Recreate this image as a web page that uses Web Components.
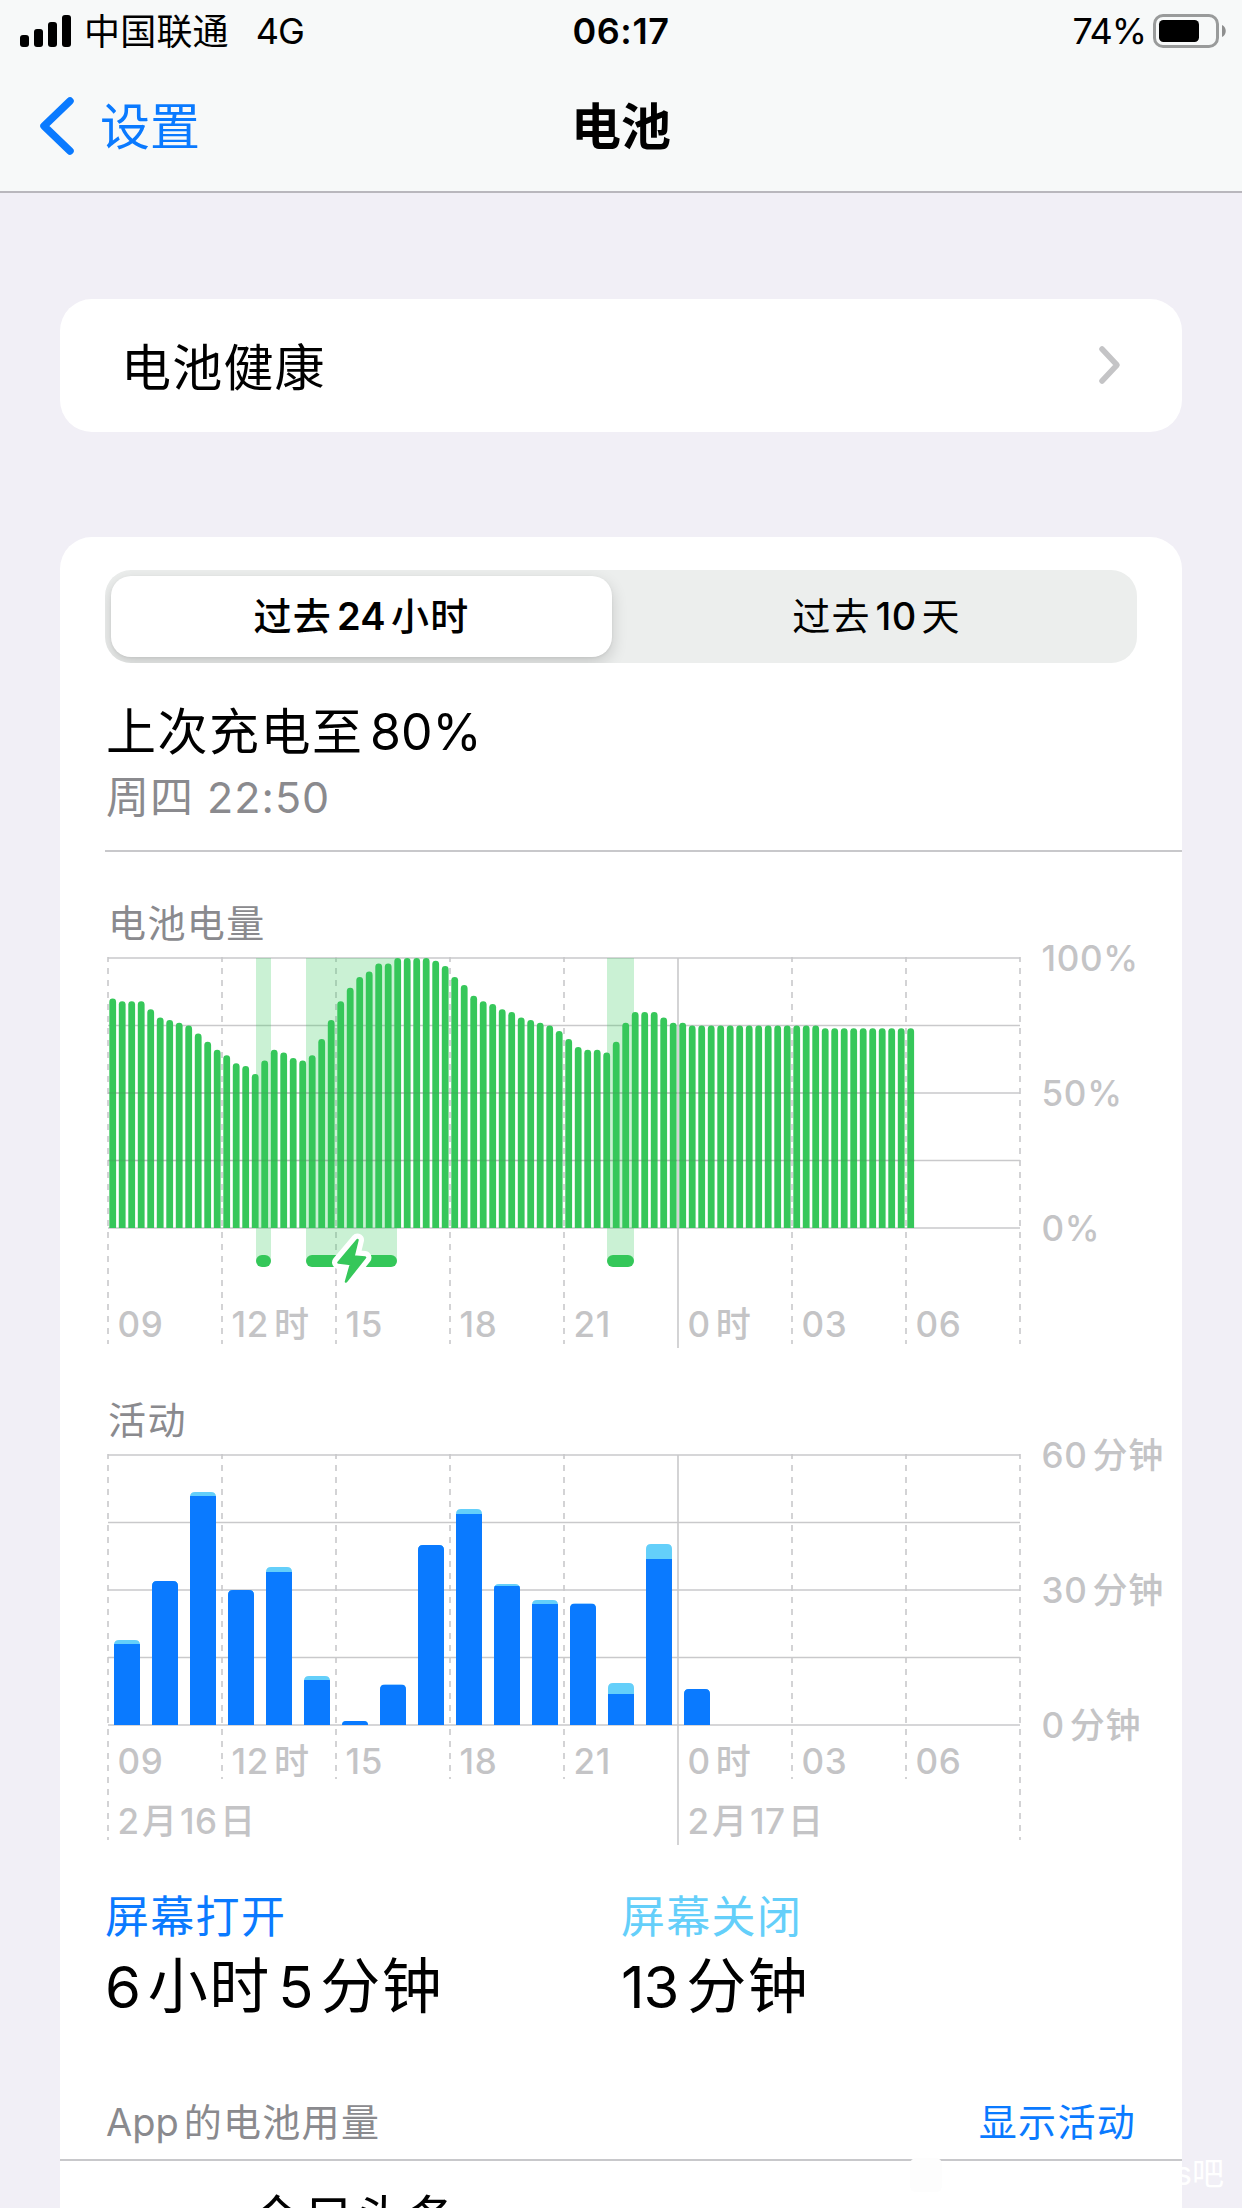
<!DOCTYPE html>
<html lang="zh-CN">
<head>
<meta charset="utf-8">
<meta name="viewport" content="width=1242">
<title>电池</title>
<style>
    body {
        margin: 0;
        width: 1242px;
        height: 2208px;
        overflow: hidden;
        background: #f1eff6;
        color: #000;
        font-family: Inter, "Noto Sans CJK SC", sans-serif;
    }
</style>
</head>
<body>
<battery-page></battery-page>

<script>
// Splits a string into CJK and latin/digit runs, so a gap can be put between them
function splitRuns(text) {
    return text.match(/[\u4e00-\u9fff]+|[^\u4e00-\u9fff]+/g) || [];
}

class MixedText extends HTMLElement {

    constructor() {
        super();
        this.attachShadow({mode: 'open'});
    }

    connectedCallback() {
        const runs = splitRuns(this.getAttribute('text'));
        this.shadowRoot.innerHTML = `
            <style>
                :host { display: block; white-space: nowrap; }
                span + span { margin-left: var(--run-gap, 0.13em); }
                .latin { letter-spacing: var(--latin-spacing, 0); }
                .cjk { font-weight: var(--cjk-weight, inherit); font-size: var(--cjk-size, 1em); }
            </style>
            ${runs.map(r => `<span class="${/[\u4e00-\u9fff]/.test(r) ? 'cjk' : 'latin'}">${r}</span>`).join('')}
            `;
    }

}

class StatusBar extends HTMLElement {

    constructor() {
        super();
        this.attachShadow({mode: 'open'});
        this.shadowRoot.innerHTML = `
            <style>
                :host {
                    display: grid;
                    grid-template-columns: 1fr auto 1fr;
                    align-items: center;
                    height: 62px;
                    padding: 0 15px;
                    font-size: 36px;
                    line-height: 44px;
                }
                svg { display: block; }
                .left, .right { display: flex; align-items: center; }
                .left { padding-left: 5px; }
                .right { justify-content: flex-end; }
                .carrier { margin-left: 13px; padding-top: 1px; letter-spacing: 0.2px; }
                .network { margin-left: 27px; letter-spacing: -1px; }
                .time { font-weight: 600; letter-spacing: 0.6px; }
                .percent { margin-right: 7px; letter-spacing: -1.1px; }
            </style>
            <div class="left">
                <svg width="51" height="34" viewBox="0 0 51 34">
                    <rect x="0" y="21" width="9" height="12" rx="3"/>
                    <rect x="14" y="15" width="9" height="18" rx="3"/>
                    <rect x="28" y="8" width="9" height="25" rx="3"/>
                    <rect x="42" y="1" width="9" height="32" rx="3"/>
                </svg>
                <span class="carrier">中国联通</span>
                <span class="network">4G</span>
            </div>
            <span class="time">06:17</span>
            <div class="right">
                <span class="percent">74%</span>
                <svg width="74" height="34" viewBox="0 0 74 34">
                    <rect x="1.5" y="1.5" width="63" height="31" rx="8.5" fill="none" stroke="#999b9b" stroke-width="3"/>
                    <rect x="6" y="6" width="40" height="22" rx="4.5"/>
                    <path d="M69 11 C74 13 74 21 69 23 Z" fill="#8e8f8f"/>
                </svg>
            </div>
            `;
    }

}

class NavBar extends HTMLElement {

    constructor() {
        super();
        this.attachShadow({mode: 'open'});
        this.shadowRoot.innerHTML = `
            <style>
                :host {
                    display: grid;
                    grid-template-columns: 1fr auto 1fr;
                    align-items: center;
                    height: 129px;
                    padding: 0 39px;
                    font-size: 50px;
                    line-height: 60px;
                    border-bottom: 2px solid #b9b7bd;
                }
                .back { display: flex; align-items: center; color: #0a7aff; }
                svg { display: block; margin-right: 25px; }
                .title { font-weight: 600; }
            </style>
            <div class="back">
                <svg width="36" height="60" viewBox="0 0 36 60">
                    <path d="M31 4 L5 29 L31 54" fill="none" stroke="#0a7aff" stroke-width="7.5" stroke-linecap="round" stroke-linejoin="round"/>
                </svg>
                <span>${this.getAttribute('back') || '设置'}</span>
            </div>
            <span class="title"><slot></slot></span>
            `;
    }

}

class SettingsCard extends HTMLElement {

    constructor() {
        super();
        this.attachShadow({mode: 'open'});
        this.shadowRoot.innerHTML = `
            <style>
                :host {
                    display: block;
                    margin: 0 60px;
                    background: #fff;
                    border-radius: 32px;
                    overflow: hidden;
                }
            </style>
            <slot></slot>
            `;
    }

}

class LinkRow extends HTMLElement {

    constructor() {
        super();
        this.attachShadow({mode: 'open'});
        this.shadowRoot.innerHTML = `
            <style>
                :host {
                    display: flex;
                    align-items: center;
                    justify-content: space-between;
                    height: 133px;
                    padding: 0 60px 0 61px;
                    font-size: 50px;
                    line-height: 60px;
                    letter-spacing: 1.2px;
                }
                span { padding-top: 6px; }
            </style>
            <span><slot></slot></span>
            <svg width="24" height="40" viewBox="0 0 24 40">
                <path d="M4 4 L19 20 L4 36" fill="none" stroke="#c4c4c6" stroke-width="5.5" stroke-linecap="round" stroke-linejoin="round"/>
            </svg>
            `;
    }

}

class SegmentedControl extends HTMLElement {

    constructor() {
        super();
        this.attachShadow({mode: 'open'});
        this.shadowRoot.innerHTML = `
            <style>
                :host {
                    display: grid;
                    grid-template-columns: 501px 1fr;
                    box-sizing: border-box;
                    height: 93px;
                    padding: 6px;
                    background: #eceeed;
                    border-radius: 26px;
                    overflow: hidden;
                    font-size: 38px;
                    line-height: 81px;
                    letter-spacing: 1.2px;
                    --latin-spacing: 0.4px;
                    --cjk-weight: 400;
                }
                .item { display: flex; justify-content: center; font-weight: 500; }
                .selected {
                    background: #fff;
                    border-radius: 20px;
                    box-shadow: 0 6px 16px rgba(0, 0, 0, 0.16), 0 1px 3px rgba(0, 0, 0, 0.06);
                    font-weight: 600;
                    --cjk-weight: 500;
                }
                .item:last-child { padding-left: 10px; }
            </style>
            <div class="item selected"><mixed-text text="过去24小时"></mixed-text></div>
            <div class="item"><mixed-text text="过去10天"></mixed-text></div>
            `;
    }

}

// Shared frame of both charts: a 912x270 plot, 24 hours wide, with a line every 3 hours
class BaseChart extends HTMLElement {

    constructor() {
        super();
        this.attachShadow({mode: 'open'});
        this._hours = ['09', '12时', '15', '18', '21', '0时', '03', '06'];
        this._plotHeight = 270;
        this._step = 114;
    }

    connectedCallback() {
        this.shadowRoot.innerHTML = `
            <style>
                :host { display: block; }
                svg { display: block; overflow: visible; }
                text {
                    font-family: Inter, "Noto Sans CJK SC", sans-serif;
                    font-size: 35px;
                    font-weight: 500;
                    letter-spacing: 0.7px;
                    fill: #c4c4c6;
                }
            </style>
            <svg width="1122" height="${this._height}" viewBox="-48 -8 1122 ${this._height}">
                ${this._grid()}
                ${this._content()}
                ${this._labels()}
            </svg>
            `;
    }

    _text(x, y, str, gap = 5) {
        const runs = splitRuns(str).map((r, i) => `<tspan${i ? ` dx="${gap}"` : ''}>${r}</tspan>`);
        return `<text x="${x}" y="${y}">${runs.join('')}</text>`;
    }

    _lines(color, width) {
        let out = '';
        for (let i = 0; i <= 4; i++) {
            const y = i * this._plotHeight / 4;
            out += `<line x1="0" x2="912" y1="${y}" y2="${y}" stroke="${color}" stroke-width="${width}"/>`;
        }
        return out;
    }

    _grid() {
        let out = this._lines('#c9c9cb', 1.6);
        for (let i = 0; i <= 8; i++) {
            const solid = i === 5;
            const end = solid ? this._solidEnd : (i % 8 ? this._dashEnd : this._edgeEnd);
            out += `<line x1="${i * this._step}" x2="${i * this._step}" y1="${solid ? 0 : -1}" y2="${end}"
                stroke="#c9c9cb" stroke-width="1.6" ${solid ? '' : 'stroke-dasharray="6 6" stroke-dashoffset="1"'}/>`;
        }
        return out;
    }

    _labels() {
        let out = '';
        this._hours.forEach((h, i) => {
            out += this._text(i * this._step + 9.5, this._hourY, h);
        });
        this._scale.forEach((s, i) => {
            out += this._text(933.5, 12.5 + i * this._plotHeight / 2, s);
        });
        return out;
    }

}

class LevelChart extends BaseChart {

    constructor() {
        super();
        this._height = 406;
        this._solidEnd = 390;
        this._dashEnd = 386;
        this._edgeEnd = 386;
        this._hourY = 378.5;
        this._scale = ['100%', '50%', '0%'];
        // Battery percentage, one value per quarter of an hour
        this._levels = [
            85, 84, 84, 84, 81, 78, 77, 76, 75, 72, 69, 66,
            64, 61, 60, 57, 62, 66, 65, 63, 62, 64, 70, 77,
            84, 89, 93, 95, 98, 98, 100, 100, 100, 100, 99, 97,
            93, 90, 86, 84, 83, 81, 80, 78, 77, 76, 75, 73,
            70, 67, 66, 66, 65, 69, 76, 80, 80, 80, 78, 76,
            76, 75, 75, 75, 75, 75, 75, 75, 75, 75, 75, 75,
            75, 75, 75, 74, 74, 74, 74, 74, 74, 74, 74, 74, 74
        ];
        this._charging = [[148, 15], [198, 91], [499, 27]];
    }

    _content() {
        let out = '';
        this._charging.forEach(([x, w]) => {
            out += `<rect x="${x}" y="0" width="${w}" height="303" fill="#34c759" fill-opacity="0.26"/>`;
        });
        this._levels.forEach((v, i) => {
            const x = 1.3 + i * 9.5;
            const y = 270 - v * 2.7;
            out += `<path d="M${x} 270 V${y + 3.4} a3.4 3.4 0 0 1 6.8 0 V270 Z" fill="#36c75a"/>`;
        });
        [135, 202.5].forEach(y => {
            out += `<line x1="0" x2="807" y1="${y}" y2="${y}" stroke="#555" stroke-opacity="0.13" stroke-width="1.4"/>`;
        });
        this._charging.forEach(([x, w]) => {
            out += `<rect x="${x}" y="297" width="${w}" height="12" rx="6" fill="#34c759"/>`;
        });
        const bolt = 'M249.5 282 L230.5 304.5 L243 306 L238 323.5 L257 299.5 L245.5 298.5 Z';
        out += `<path d="${bolt}" fill="#fff" stroke="#fff" stroke-width="13" stroke-linejoin="round"/>`;
        out += `<path d="${bolt}" fill="#36c75a" stroke="#36c75a" stroke-width="2.5" stroke-linejoin="round"/>`;
        return out;
    }

}

class ActivityChart extends BaseChart {

    constructor() {
        super();
        this._height = 406;
        this._solidEnd = 390;
        this._dashEnd = 324;
        this._edgeEnd = 385;
        this._hourY = 318.5;
        this._scale = ['60分钟', '30分钟', '0分钟'];
        // Per hour: height with the screen off part included, height of the screen on part
        this._bars = [
            [85, 81], [144, 144], [233, 229], [135, 135], [158, 153], [49, 45],
            [4, 4], [40.5, 40.5], [180, 180], [216, 211], [141, 139], [125, 121],
            [121.5, 121.5], [42, 31], [181, 166], [36, 36]
        ];
    }

    _content() {
        let out = '';
        this._bars.forEach(([total, on], i) => {
            const x = 6 + i * 38;
            const r = Math.min(5, total);
            const clip = `bar${i}`;
            out += `
                <clipPath id="${clip}">
                    <path d="M${x} 270 V${270 - total + r} q0 ${-r} ${r} ${-r} h${26 - 2 * r} q${r} 0 ${r} ${r} V270 Z"/>
                </clipPath>
                <g clip-path="url(#${clip})">
                    <rect x="${x}" y="${270 - total}" width="26" height="${total}" fill="#64cffa"/>
                    <rect x="${x}" y="${270 - on}" width="26" height="${on}" fill="#0a7aff"/>
                </g>`;
        });
        out += this._text(9.5, 379, '2月16日', 2.2);
        out += this._text(579.5, 379, '2月17日', 2.2);
        return out;
    }

}

class UsageTotal extends HTMLElement {

    constructor() {
        super();
        this.attachShadow({mode: 'open'});
    }

    connectedCallback() {
        this.shadowRoot.innerHTML = `
            <style>
                :host { display: block; }
                .label {
                    font-size: 44px;
                    line-height: 54px;
                    letter-spacing: 1.3px;
                    color: var(--label-color);
                }
                mixed-text {
                    margin-top: 7px;
                    font-size: 58px;
                    line-height: 70px;
                    letter-spacing: 1.5px;
                    --latin-spacing: -1px;
                    --cjk-size: 60px;
                }
            </style>
            <div class="label"><slot></slot></div>
            <mixed-text text="${this.getAttribute('value')}"></mixed-text>
            `;
    }

}

class BatteryPage extends HTMLElement {

    constructor() {
        super();
        this.attachShadow({mode: 'open'});
        this.shadowRoot.innerHTML = `
            <style>
                :host { display: block; position: relative; height: 2208px; overflow: hidden; }
                header { background: #f7f9f9; }
                .health { margin-top: 105.5px; }
                .usage { margin-top: 105px; height: 1740px; }
                segmented-control { margin: 33px 45px 0 45px; }
                .heading {
                    margin: 39px 0 0 46px;
                    font-size: 50px;
                    line-height: 60px;
                    letter-spacing: 1.5px;
                    --latin-spacing: 0;
                }
                .sub {
                    margin: 9px 0 0 46px;
                    font-size: 43px;
                    line-height: 52px;
                    letter-spacing: 1px;
                    color: #8a8a8e;
                }
                .rule { height: 2px; margin: 27px 0 0 45px; background: #c8c8cb; }
                .caption {
                    margin-left: 48px;
                    font-size: 38px;
                    line-height: 50px;
                    letter-spacing: 1.4px;
                    color: #8a8a8e;
                }
                .level { margin-top: 46.5px; }
                .activity { margin-top: 39px; }
                level-chart, activity-chart { margin-top: 2px; }
                .totals {
                    display: grid;
                    grid-template-columns: 516px 1fr;
                    margin: 37px 0 0 45px;
                }
                .on { --label-color: #0a7aff; }
                .off { --label-color: #64cffa; }
                .apps {
                    display: flex;
                    justify-content: space-between;
                    margin: 75px 46px 0 46px;
                    font-size: 38px;
                    line-height: 50px;
                    letter-spacing: 1.3px;
                    color: #8a8a8e;
                    --latin-spacing: 0;
                }
                .apps .link { color: #0a7aff; }
                .full { margin: 12px 0 0 0; }
                .app { margin: 29px 0 0 191px; font-size: 51px; line-height: 60px; letter-spacing: 1px; }
                .mark {
                    position: absolute;
                    left: 1175px;
                    top: 2153px;
                    font-size: 32px;
                    line-height: 42px;
                    color: #fff;
                }
                .badge {
                    position: absolute;
                    left: 910px;
                    top: 2158px;
                    width: 32px;
                    height: 34px;
                    border-radius: 6px;
                    background: #fdfdfd;
                }
            </style>
            <header>
                <status-bar></status-bar>
                <nav-bar>电池</nav-bar>
            </header>
            <settings-card class="health">
                <link-row>电池健康</link-row>
            </settings-card>
            <settings-card class="usage">
                <div style="display: flow-root">
                    <segmented-control></segmented-control>
                    <mixed-text class="heading" text="上次充电至80%"></mixed-text>
                    <div class="sub">周四 22:50</div>
                    <div class="rule"></div>
                    <div class="caption level">电池电量</div>
                    <level-chart></level-chart>
                    <div class="caption activity">活动</div>
                    <activity-chart></activity-chart>
                    <div class="totals">
                        <usage-total class="on" value="6小时5分钟">屏幕打开</usage-total>
                        <usage-total class="off" value="13分钟">屏幕关闭</usage-total>
                    </div>
                    <div class="apps">
                        <mixed-text text="App的电池用量"></mixed-text>
                        <span class="link">显示活动</span>
                    </div>
                    <div class="rule full"></div>
                    <div class="app">今日头条</div>
                </div>
            </settings-card>
            <div class="badge"></div>
            <div class="mark">s吧</div>
            `;
    }

}

customElements.define('mixed-text', MixedText);
customElements.define('status-bar', StatusBar);
customElements.define('nav-bar', NavBar);
customElements.define('settings-card', SettingsCard);
customElements.define('link-row', LinkRow);
customElements.define('segmented-control', SegmentedControl);
customElements.define('level-chart', LevelChart);
customElements.define('activity-chart', ActivityChart);
customElements.define('usage-total', UsageTotal);
customElements.define('battery-page', BatteryPage);
</script>
</body>
</html>
